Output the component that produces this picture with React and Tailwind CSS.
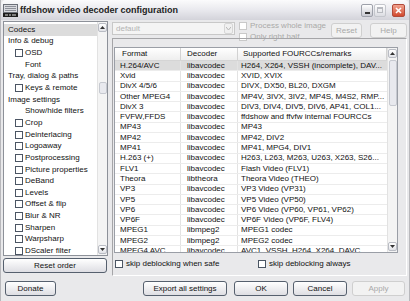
import React from 'react';

const treeItems = [
  { label: 'Codecs', level: 0, selected: true },
  { label: 'Info & debug', level: 0 },
  { label: 'OSD', level: 1, check: true },
  { label: 'Font', level: 1 },
  { label: 'Tray, dialog & paths', level: 0 },
  { label: 'Keys & remote', level: 1, check: true },
  { label: 'Image settings', level: 0 },
  { label: 'Show/hide filters', level: 1 },
  { label: 'Crop', level: 1, check: true },
  { label: 'Deinterlacing', level: 1, check: true },
  { label: 'Logoaway', level: 1, check: true },
  { label: 'Postprocessing', level: 1, check: true },
  { label: 'Picture properties', level: 1, check: true },
  { label: 'DeBand', level: 1, check: true },
  { label: 'Levels', level: 1, check: true },
  { label: 'Offset & flip', level: 1, check: true },
  { label: 'Blur & NR', level: 1, check: true },
  { label: 'Sharpen', level: 1, check: true },
  { label: 'Warpsharp', level: 1, check: true },
  { label: 'DScaler filter', level: 1, check: true },
];

const codecs = [
  ['H.264/AVC', 'libavcodec', 'H264, X264, VSSH (incomplete), DAV...'],
  ['Xvid', 'libavcodec', 'XVID, XVIX'],
  ['DivX 4/5/6', 'libavcodec', 'DIVX, DX50, BL20, DXGM'],
  ['Other MPEG4', 'libavcodec', 'MP4V, 3IVX, 3IV2, MP4S, M4S2, RMP...'],
  ['DivX 3', 'libavcodec', 'DIV3, DIV4, DIV5, DIV6, AP41, COL1...'],
  ['FVFW,FFDS', 'libavcodec', 'ffdshow and ffvfw internal FOURCCs'],
  ['MP43', 'libavcodec', 'MP43'],
  ['MP42', 'libavcodec', 'MP42, DIV2'],
  ['MP41', 'libavcodec', 'MP41, MPG4, DIV1'],
  ['H.263 (+)', 'libavcodec', 'H263, L263, M263, U263, X263, S26...'],
  ['FLV1', 'libavcodec', 'Flash Video (FLV1)'],
  ['Theora', 'libtheora', 'Theora Video (THEO)'],
  ['VP3', 'libavcodec', 'VP3 Video (VP31)'],
  ['VP5', 'libavcodec', 'VP5 Video (VP50)'],
  ['VP6', 'libavcodec', 'VP6 Video (VP60, VP61, VP62)'],
  ['VP6F', 'libavcodec', 'VP6F Video (VP6F, FLV4)'],
  ['MPEG1', 'libmpeg2', 'MPEG1 codec'],
  ['MPEG2', 'libmpeg2', 'MPEG2 codec'],
  ['MPEG4 AVC', 'libavcodec', 'AVC1, VSSH, H264, X264, DAVC'],
];

const Check = ({ disabled }) => (
  <span
    className={`inline-block w-[8px] h-[8px] shrink-0 border ${
      disabled ? 'border-[#c9c9c9] bg-white' : 'border-[#4b5563] bg-white'
    }`}
  />
);

const Btn = ({ children, className = '', disabled }) => (
  <div
    className={`flex items-center justify-center rounded-[3px] border text-[8px] ${
      disabled
        ? 'border-[#cfcfcf] bg-[#f2f2f2] text-[#a8a8a8]'
        : 'border-[#56606e] bg-linear-to-b from-white to-[#dedee3] text-[#111]'
    } ${className}`}
  >
    {children}
  </div>
);

const Arrow = ({ up }) => (
  <div className="w-[9px] h-[9px] rounded-[2px] border border-[#b9bcc4] bg-linear-to-b from-white to-[#e2e3e8] flex items-center justify-center">
    <svg width="5" height="3" viewBox="0 0 5 3">
      <path d={up ? 'M0 3 L2.5 0 L5 3 Z' : 'M0 0 L2.5 3 L5 0 Z'} fill="#333" />
    </svg>
  </div>
);

const ScrollBar = ({ thumbTop, thumbH }) => (
  <div className="relative w-[10px] h-full bg-[#f4f4f4] border-l border-[#e2e2e2] flex flex-col justify-between items-center py-[1px]">
    <Arrow up />
    <div
      className="absolute left-[1px] w-[8px] rounded-[2px] border border-[#c6c9d0] bg-[#e8e9ee]"
      style={{ top: thumbTop, height: thumbH }}
    />
    <Arrow />
  </div>
);

export default function App() {
  return (
    <div className="w-[410px] h-[301px] bg-[#e9e9eb] flex flex-col font-['Liberation_Sans',Arial,sans-serif] text-[#111] overflow-hidden border-x border-[#b8b8bc]">
      {/* title bar */}
      <div className="h-[20px] shrink-0 flex items-center pl-[2px] pr-[4px] bg-linear-to-b from-[#fbfbfc] via-[#e9e9ee] to-[#d3d3da] rounded-t-[5px]">
        <svg width="15" height="13" viewBox="0 0 15 13" className="shrink-0">
          <rect x="0.5" y="0.5" width="14" height="8" fill="#d9dadf" stroke="#6b6f78" />
          <path d="M2 2.5h11M2 4.5h11M2 6.5h11" stroke="#8d9099" strokeWidth="1" />
          <rect x="0" y="9" width="15" height="4" fill="#1d1d1d" />
          <path d="M2 11h3M6 11h2M9 11h4" stroke="#ddd" strokeWidth="1" />
        </svg>
        <span className="ml-[2px] text-[9px] font-bold text-[#222] leading-none">
          ffdshow video decoder configuration
        </span>
        <div className="ml-auto flex items-center gap-[1px]">
          <div className="w-[12px] h-[13px] rounded-[2px] border border-[#9ea1aa] bg-linear-to-b from-white to-[#c9cad2] flex items-end justify-center pb-[2px]">
            <div className="w-[5px] h-[2px] bg-[#333]" />
          </div>
          <div className="w-[12px] h-[13px] rounded-[2px] border border-[#c4c6cc] bg-linear-to-b from-white to-[#dcdde3] flex items-center justify-center">
            <div className="w-[6px] h-[6px] border border-[#b8bac0] border-t-2" />
          </div>
          <div className="ml-[5px] w-[13px] h-[13px] rounded-[2px] border border-[#b04a3a] bg-linear-to-b from-[#f1a28e] to-[#d0482d] flex items-center justify-center">
            <svg width="7" height="7" viewBox="0 0 7 7">
              <path d="M1 1 L6 6 M6 1 L1 6" stroke="white" strokeWidth="1.6" />
            </svg>
          </div>
        </div>
      </div>

      {/* main area */}
      <div className="flex flex-1 min-h-0 pl-[2px] pr-[2px] pt-[1px]">
        {/* left column */}
        <div className="w-[105px] shrink-0 flex flex-col">
          <div className="h-[235px] bg-white border border-[#8d9199] flex">
            <div className="flex-1 pt-[2px] overflow-hidden">
              {treeItems.map((it) => (
                <div
                  key={it.label}
                  className={`h-[11.65px] flex items-center text-[8px] whitespace-nowrap ${
                    it.selected ? 'bg-[#dcdcdc]' : ''
                  } ${it.level === 0 ? 'pl-[4px]' : it.check ? 'pl-[11px]' : 'pl-[21px]'}`}
                >
                  {it.check && <Check />}
                  <span className={it.check ? 'ml-[2px]' : ''}>{it.label}</span>
                </div>
              ))}
            </div>
            <ScrollBar thumbTop={60} thumbH={12} />
          </div>
          <Btn className="mt-[2px] h-[15px] w-[104px]">Reset order</Btn>
        </div>

        {/* right column */}
        <div className="flex-1 flex flex-col ml-[4px]">
          <div className="h-[17px] flex items-start shrink-0">
            <div className="w-[123px] h-[13px] mt-[1px] border border-[#c8c8c8] bg-[#f4f4f4] flex items-center">
              <span className="pl-[3px] text-[8px] text-[#b3b3b3] flex-1">default</span>
              <div className="w-[9px] h-[11px] mr-[1px] rounded-[2px] border border-[#d6d6d6] bg-[#f0f0f0] flex items-center justify-center">
                <svg width="5" height="3" viewBox="0 0 5 3">
                  <path d="M0 0 L2.5 3 L5 0" stroke="#b5b5b5" fill="none" />
                </svg>
              </div>
            </div>
            <div className="ml-[4px] flex flex-col gap-[3px] pt-[1px]">
              <div className="flex items-center gap-[3px] text-[8px] text-[#a9a9a9] leading-none">
                <Check disabled />
                <span>Process whole image</span>
              </div>
              <div className="flex items-center gap-[3px] text-[8px] text-[#a9a9a9] leading-none">
                <Check disabled />
                <span>Only right half</span>
              </div>
            </div>
            <Btn disabled className="ml-auto mt-[2px] w-[31px] h-[15px]">Reset</Btn>
            <Btn disabled className="ml-[8px] mt-[2px] w-[37px] h-[15px]">Help</Btn>
          </div>

          {/* frame */}
          <div className="h-[238px] border-t border-l border-[#a5a5a8] border-b border-r border-b-white border-r-white pt-[8px] pl-[1px] pr-[8px] flex flex-col">
            <div className="h-[206px] bg-white border border-[#9a9ea6] flex">
              <div className="flex-1 flex flex-col overflow-hidden">
                <div className="h-[13px] shrink-0 flex text-[8px] bg-linear-to-b from-white to-[#eeeeee] border-b border-[#d5d5d5]">
                  <div className="w-[66px] pl-[7px] flex items-center border-r border-[#d2d2d2]">Format</div>
                  <div className="w-[57px] pl-[6px] flex items-center border-r border-[#d2d2d2]">Decoder</div>
                  <div className="flex-1 pl-[5px] flex items-center border-r border-[#d2d2d2]">Supported FOURCCs/remarks</div>
                </div>
                {codecs.map(([f, d, r], i) => (
                  <div
                    key={f}
                    className={`h-[10.3px] shrink-0 flex text-[8px] leading-none border-b border-[#ececec] ${
                      i === 0 ? 'bg-[#dcdcdc]' : ''
                    }`}
                  >
                    <div className="w-[66px] pl-[5px] flex items-center border-r border-[#e3e3e3] whitespace-nowrap">{f}</div>
                    <div className="w-[57px] pl-[6px] flex items-center border-r border-[#e3e3e3] whitespace-nowrap">{d}</div>
                    <div className="flex-1 pl-[3px] flex items-center whitespace-nowrap overflow-hidden">{r}</div>
                  </div>
                ))}
              </div>
              <ScrollBar thumbTop={12} thumbH={46} />
            </div>
            <div className="flex items-center mt-[5px] text-[8px]">
              <div className="flex items-center gap-[3px] w-[144px] pl-[1px]">
                <Check />
                <span>skip deblocking when safe</span>
              </div>
              <div className="flex items-center gap-[3px]">
                <Check />
                <span>skip deblocking always</span>
              </div>
            </div>
          </div>
        </div>
      </div>

      {/* bottom buttons */}
      <div className="h-[21px] shrink-0 flex items-start pl-[4px] pr-[4px] pt-[1px]">
        <Btn className="w-[51px] h-[15px]">Donate</Btn>
        <Btn className="ml-[87px] w-[84px] h-[15px]">Export all settings</Btn>
        <Btn className="ml-[7px] w-[54px] h-[15px]">OK</Btn>
        <Btn className="ml-[5px] w-[54px] h-[15px]">Cancel</Btn>
        <Btn disabled className="ml-[5px] w-[53px] h-[15px]">Apply</Btn>
      </div>
    </div>
  );
}
